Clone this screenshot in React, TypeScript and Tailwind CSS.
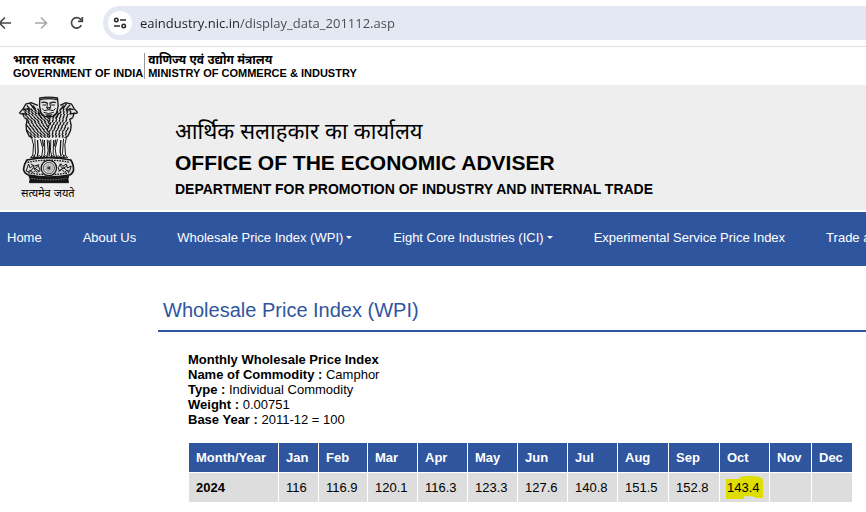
import React from 'react';

const navItems = [
  { label: 'Home', menu: false },
  { label: 'About Us', menu: false },
  { label: 'Wholesale Price Index (WPI)', menu: true },
  { label: 'Eight Core Industries (ICI)', menu: true },
  { label: 'Experimental Service Price Index', menu: false },
  { label: 'Trade a', menu: false },
];

const details = [
  ['Name of Commodity', 'Camphor'],
  ['Type', 'Individual Commodity'],
  ['Weight', '0.00751'],
  ['Base Year', '2011-12 = 100'],
];

const months = [
  { name: 'Jan', value: '116', width: 'w-10' },
  { name: 'Feb', value: '116.9', width: 'w-[49px]' },
  { name: 'Mar', value: '120.1', width: 'w-[50px]' },
  { name: 'Apr', value: '116.3', width: 'w-[50px]' },
  { name: 'May', value: '123.3', width: 'w-[50px]' },
  { name: 'Jun', value: '127.6', width: 'w-[50px]' },
  { name: 'Jul', value: '140.8', width: 'w-[50px]' },
  { name: 'Aug', value: '151.5', width: 'w-[51px]' },
  { name: 'Sep', value: '152.8', width: 'w-[51px]' },
  { name: 'Oct', value: '143.4', width: 'w-[50px]', marked: true },
  { name: 'Nov', value: '', width: 'w-[42px]' },
  { name: 'Dec', value: '', width: 'w-[41px]' },
];

// Rows of curls for the manes of the lions
const maneRows = [
  { y: 72, from: 72, to: 222 },
  { y: 80, from: 68, to: 222 },
  { y: 88, from: 74, to: 218 },
  { y: 96, from: 76, to: 214 },
  { y: 104, from: 80, to: 210 },
  { y: 112, from: 78, to: 212 },
  { y: 120, from: 78, to: 212 },
  { y: 128, from: 80, to: 210 },
  { y: 136, from: 80, to: 210 },
  { y: 144, from: 84, to: 206 },
  { y: 152, from: 90, to: 200 },
];

const curls = maneRows
  .map(({ y, from, to }, row) => {
    let d = '';
    for (let x = from + (row % 2) * 5; x < to - 4; x += 10) {
      const lean = x < 145 ? 5 : -5;
      d += `M${x} ${y}q${lean} 8 ${x < 145 ? 8 : -1} 7`;
    }
    return d;
  })
  .join('');

const Emblem = () => (
  <svg viewBox="54 34 182 264" className="h-[88px] w-[61px]" fill="none" stroke="#161616" strokeWidth="3" role="img" aria-label="State Emblem of India">
    <path d="M120 40h52l4 20 8-4 16-4 14 7 8 13 11 12-9 5-2 14-9 3 1 20-3 22-11 14-16 5H102l-15-6-8-16-1-18 3-17-10-4-3-14-11-5 12-15 8-13 14-5 14 5 11 5z" fill="#e2e2e2" stroke="none" />
    <path d={curls} strokeWidth="4" />
    {/* side lions */}
    <path d="M57 86l12-14 8-14 16-4 20 8M68 88l-9-1M69 76l13-4 6 8M72 98l-4-11 14 2M80 62l11 14M90 57l12 16M98 62l9 12M73 99l8 5-3 18 1 16 8 16 13 8" strokeWidth="4" />
    <path d="M233 84l-11-12-8-14-17-4-17 8M222 87l10-2M220 75l-12-3-7 8M218 98l4-12-14 2M209 61l-12 14M199 57l-11 16M190 62l-8 12M218 99l-9 5 4 18-2 16-8 16-13 8" strokeWidth="4" />
    {/* middle lion */}
    <path d="M119 40q27-5 53 0l2 24-5 22-13 10h-21l-12-10-5-22z" fill="#e4e4e4" strokeWidth="4" />
    <path d="M120 45q26-6 51 0" strokeWidth="4" />
    <path d="M124 54q9-4 17 2M150 56q9-6 17-2" strokeWidth="4" />
    <path d="M127 61h11M153 61h11M142 54l-2 15M149 54l2 15" />
    <path d="M139 69h13l-6 5zM126 71l6 7 14-3 14 3 6-7M130 83q15 7 31 0" />
    <path d="M134 89h24l-5 5h-14z" fill="#333" stroke="none" />
    <path d="M119 80l9 14M172 80l-9 14M113 84l12 17M178 84l-12 17" strokeWidth="4" />
    {/* forelegs */}
    <path d="M94 159h107l-7 34 5 28H92l9-28z" fill="#f4f4f4" stroke="none" />
    <path d="M94 157l6 24-2 30-7 9M104 162l2 45-6 12M120 163l8 29-4 27M133 166l1 40-5 13M141 165l3 33-4 19M152 165l-1 33 4 19M160 166l-1 40 5 13M172 163l-7 29 4 27M190 162l-3 45 6 12M199 157l-5 24 2 30 7 9" />
    <path d="M112 166l2 36-3 14M127 165l3 20M146 167l2 12-1 35M166 165l-3 20M182 166l-2 36 3 14" strokeWidth="4" />
    <path d="M91 218h109M97 212l12 8 8-8 11 8 8-7 10 7 10-7 9 7 9-7 9 7 12-8" />
    {/* abacus */}
    <path d="M80 226q66-14 132 0 9 14 8 32-5 12-13 13-62 13-122 0-12-4-15-17 2-16 10-28z" fill="#dedede" strokeWidth="5" />
    <path d="M82 233q63-13 127 0M84 264q61 12 122 0" strokeWidth="4" strokeDasharray="5 3" />
    <path d="M78 259l7-21 5 12 8-7 5 12 11-13 6 15-7 6-8-5-6 6-9-8-5 6zM174 249l8-12 6 8 10-7 4 12 11-6-5 16-8-3-7 6-8-9-7 5z" />
    <path d="M92 238l11 6 14-4M88 263l12-14 18 11M178 240l10 12 13-9M175 260l15-11 17 14" />
    <circle cx="146" cy="250" r="23" fill="#ededed" strokeWidth="4" />
    <circle cx="146" cy="250" r="17" strokeWidth="2" />
    <path d="M146 233v34M129 250h34M134 238l24 24M158 238l-24 24M139 234l14 32M153 234l-14 32M130 243l32 14M162 243l-32 14" strokeWidth="1" />
    <circle cx="146" cy="250" r="4" fill="#333" stroke="none" />
    {/* base */}
    <path d="M86 273q59 12 120 0l-3 10 2 11H88l2-11z" fill="#151515" stroke="#151515" />
    <path d="M93 281q54 9 106 0" stroke="#aaa" strokeWidth="2" strokeDasharray="5 3" />
  </svg>
);

const BrowserBar = () => (
  <div className="flex h-[47px] items-center overflow-hidden border-b border-[#dfdfdf] bg-white">
    <button type="button" aria-label="Back" className="w-7 shrink-0">
      <svg viewBox="0 0 28 20" className="h-5 w-7" fill="none" stroke="#474747" strokeWidth="1.6">
        <path d="M11 10H0M5 4.5L-.5 10 5 15.5" />
      </svg>
    </button>
    <button type="button" aria-label="Forward" className="w-9 shrink-0">
      <svg viewBox="0 0 36 20" className="h-5 w-9" fill="none" stroke="#a9a9a9" strokeWidth="1.6">
        <path d="M7 10h11M13 4.5l5.5 5.5-5.5 5.5" />
      </svg>
    </button>
    <button type="button" aria-label="Reload" className="w-[39px] shrink-0">
      <svg viewBox="0 0 39 20" className="h-5 w-[39px]" fill="none" stroke="#474747" strokeWidth="1.7">
        <path d="M17.3 12.2a5.2 5.2 0 1 1-.9-6l1.8 1.9" />
        <path d="M18.3 4v4.4h-4.4" />
      </svg>
    </button>
    <div className="-mr-5 flex h-[34px] flex-1 items-center gap-2 rounded-full bg-[#e3e8f2] pl-[5px]">
      <button type="button" aria-label="Site information" className="flex size-6 shrink-0 items-center justify-center rounded-full bg-white">
        <svg viewBox="0 0 14 14" className="size-[14px]" fill="none" stroke="#2c2c2c" strokeWidth="1.6">
          <circle cx="3.3" cy="4" r="1.7" />
          <path d="M7 4h6M1 10h6" />
          <circle cx="10.7" cy="10" r="1.7" />
        </svg>
      </button>
      {/* the host is darker than the path */}
      <input
        aria-label="Address"
        defaultValue="eaindustry.nic.in/display_data_201112.asp"
        className="min-w-0 flex-1 bg-[linear-gradient(90deg,#202124_99px,#47494e_99px)] bg-clip-text font-['Open_Sans','Noto_Sans',sans-serif] text-[13px] leading-5 text-transparent caret-black outline-none"
      />
    </div>
  </div>
);

const GovernmentStrip = () => (
  <div className="flex h-[38px] items-center pl-[13px] text-[11px] font-bold leading-3 whitespace-nowrap">
    <div className="border-r border-[#999] pr-px">
      <p className="text-xs leading-[14px]" lang="hi">भारत सरकार</p>
      <p>GOVERNMENT OF INDIA</p>
    </div>
    <div className="pl-[3px]">
      <p className="text-xs leading-[14px]" lang="hi">वाणिज्य एवं उद्योग मंत्रालय</p>
      <p>MINISTRY OF COMMERCE &amp; INDUSTRY</p>
    </div>
  </div>
);

const Masthead = () => (
  <header className="flex h-[125px] bg-[#eee] pl-[18px] whitespace-nowrap">
    <div className="flex w-[157px] shrink-0 flex-col items-start pt-[11px]">
      <Emblem />
      <p className="pl-[3px] text-[11px] leading-[18px]" lang="hi">सत्यमेव जयते</p>
    </div>
    <div className="pt-8">
      <p className="text-[22px] leading-[30px]" lang="hi">आर्थिक सलाहकार का कार्यालय</p>
      <h1 className="text-[21px] font-bold leading-8">OFFICE OF THE ECONOMIC ADVISER</h1>
      <p className="text-sm font-bold leading-5">DEPARTMENT FOR PROMOTION OF INDUSTRY AND INTERNAL TRADE</p>
    </div>
  </header>
);

const MainNav = () => (
  <nav className="mt-[2px] overflow-hidden bg-[#30559f]">
    <ul className="flex h-[54px] items-center gap-[41px] pb-[3px] pl-[7px] text-[13px] whitespace-nowrap text-white">
      {navItems.map((item) => (
        <li key={item.label}>
          <a href="#" className="flex items-center gap-[3px]">
            {item.label}
            {item.menu && <span className="border-x-[3px] border-t-[3px] border-x-transparent border-t-white" />}
          </a>
        </li>
      ))}
    </ul>
  </nav>
);

const PriceTable = () => (
  <table className="mt-[15px] table-fixed border-collapse text-left text-[13px] leading-5">
    <thead className="bg-[#30559f] text-white">
      <tr className="h-[30px]">
        <th className="w-[90px] border border-white pl-[7px]">Month/Year</th>
        {months.map((month) => (
          <th key={month.name} className={`${month.width} border border-white pl-[7px]`}>
            {month.name}
          </th>
        ))}
      </tr>
    </thead>
    <tbody>
      <tr className="h-[30px] bg-[#ddd]">
        <th className="border border-white pl-[7px]">2024</th>
        {months.map((month) => (
          <td key={month.name} className="border border-white pl-[7px]">
            {month.marked ? (
              <mark className="relative isolate bg-transparent text-inherit">
                <svg viewBox="0 0 38 23" className="absolute -top-1 -left-px -z-10 h-[23px] w-[38px] max-w-none" fill="#dede00">
                  <path d="M0 3h13c1-3 5-3 9-3 6 0 14 0 15 4v18H30c-4-3-8-1-12-2v3H0z" />
                </svg>
                {month.value}
              </mark>
            ) : (
              month.value
            )}
          </td>
        ))}
      </tr>
    </tbody>
  </table>
);

export default function App() {
  return (
    <div className="overflow-hidden bg-white font-['Liberation_Sans','Noto_Sans_Devanagari',Arial,sans-serif] text-black">
      <BrowserBar />
      <GovernmentStrip />
      <Masthead />
      <MainNav />
      <main className="ml-[158px] pt-7">
        <h2 className="border-b-2 border-[#30559f] pb-1 pl-[5px] text-xl leading-8 text-[#30559f]">Wholesale Price Index (WPI)</h2>
        <div className="pt-5 pl-[30px]">
          <div className="text-[13px] leading-[15px]">
            <h3 className="font-bold">Monthly Wholesale Price Index</h3>
            {details.map(([label, value]) => (
              <p key={label}>
                <b>{label} :</b> {value}
              </p>
            ))}
          </div>
          <PriceTable />
        </div>
      </main>
    </div>
  );
}
